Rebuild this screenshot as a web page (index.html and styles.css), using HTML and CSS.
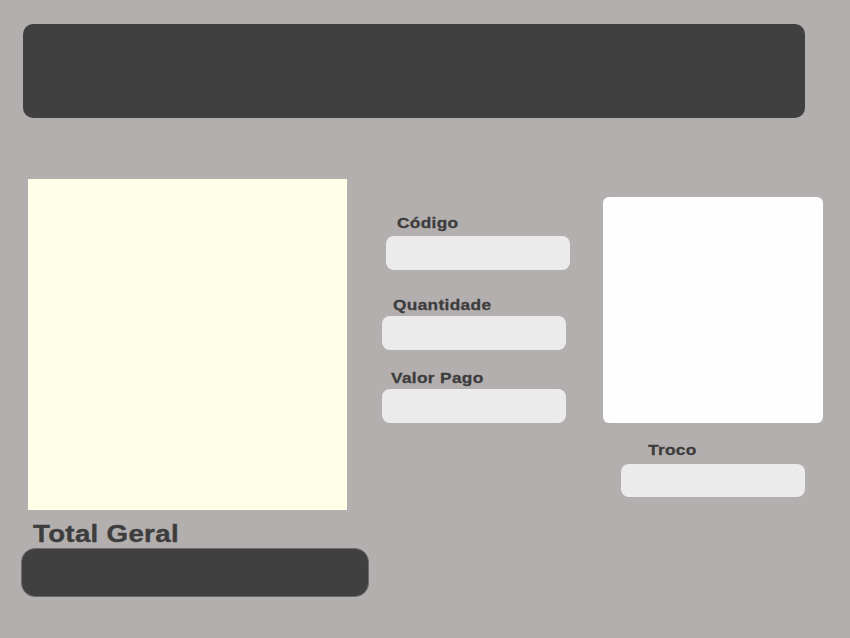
FILE: index.html
```html
<!DOCTYPE html>
<html lang="pt-BR">
<head>
<meta charset="utf-8">
<title>Caixa</title>
<link rel="stylesheet" href="styles.css">
</head>
<body>
  <header class="topbar"></header>
  <main class="content">
    <section class="col-left">
      <div class="items-panel"></div>
      <div class="total-label">Total Geral</div>
      <div class="total-box"></div>
    </section>
    <section class="col-mid">
      <div class="field field-codigo">
        <label class="field-label">Código</label>
        <div class="input"></div>
      </div>
      <div class="field field-qtd">
        <label class="field-label">Quantidade</label>
        <div class="input"></div>
      </div>
      <div class="field field-pago">
        <label class="field-label">Valor Pago</label>
        <div class="input"></div>
      </div>
    </section>
    <section class="col-right">
      <div class="preview"></div>
      <div class="field field-troco">
        <label class="field-label">Troco</label>
        <div class="input input-troco"></div>
      </div>
    </section>
  </main>
</body>
</html>
```

FILE: styles.css
```css
* { box-sizing: border-box; }
html, body {
  margin: 0;
  padding: 0;
}
body {
  background: #b4afaf;
  font-family: "Liberation Sans", Arial, sans-serif;
  color: #3d3d3d;
  width: 850px;
  height: 638px;
  overflow: hidden;
}
.topbar {
  margin: 24px 0 0 23px;
  width: 782px;
  height: 94px;
  background: #404040;
  border-radius: 10px;
}
.content {
  display: flex;
  align-items: flex-start;
}
.col-left {
  margin-left: 21px;
  width: 348px;
  display: flex;
  flex-direction: column;
}
.items-panel {
  margin: 61px 0 0 7px;
  width: 319px;
  height: 331px;
  background: #fffee6;
}
.total-label {
  align-self: flex-start;
  margin: 10px 0 0 12px;
  font-size: 24px;
  font-weight: bold;
  line-height: 28px;
  letter-spacing: 0.3px;
  -webkit-text-stroke: 0.4px #3d3d3d;
  transform: scaleX(1.15);
  transform-origin: left center;
}
.total-box {
  width: 348px;
  height: 49px;
  background: #404040;
  border: 1px solid #6b6b6b;
  border-radius: 14px;
}
.col-mid {
  margin: 96px 0 0 13px;
  width: 188px;
  display: flex;
  flex-direction: column;
}
.field {
  display: flex;
  flex-direction: column;
}
.field-label {
  align-self: flex-start;
  font-size: 15px;
  font-weight: bold;
  line-height: 18px;
  letter-spacing: 0.3px;
  -webkit-text-stroke: 0.3px #3d3d3d;
  transform: scaleX(1.15);
  transform-origin: left center;
}
.input {
  width: 184px;
  height: 34px;
  background: #ebebeb;
  border-radius: 8px;
}
.field-codigo { margin-left: 4px; }
.field-codigo .field-label { margin-left: 11px; margin-bottom: 4px; }
.field-qtd { margin-top: 26px; }
.field-qtd .field-label { margin-left: 11px; margin-bottom: 2px; }
.field-pago { margin-top: 19px; }
.field-pago .field-label { margin-left: 9px; margin-bottom: 2px; }
.col-right {
  margin: 79px 0 0 33px;
  width: 220px;
  display: flex;
  flex-direction: column;
}
.preview {
  width: 220px;
  height: 226px;
  background: #fefefe;
  border-radius: 6px;
}
.field-troco {
  margin: 18px 0 0 18px;
}
.field-troco .field-label { margin-left: 27px; margin-bottom: 5px; }
.input-troco { height: 33px; }
```
